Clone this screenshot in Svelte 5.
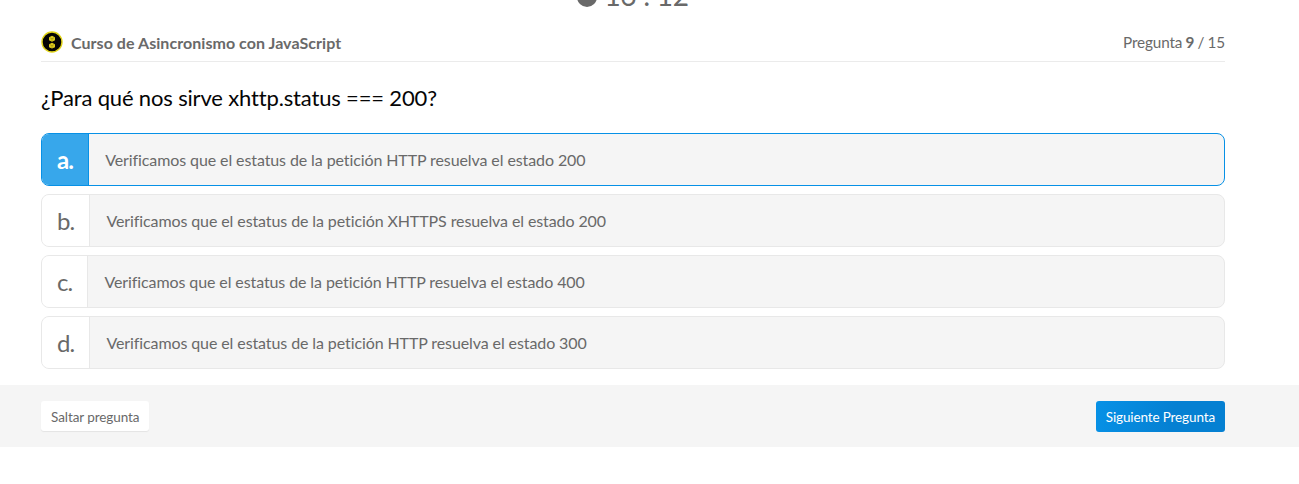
<script>
  const options = [
    { key: 'a', text: 'Verificamos que el estatus de la petición HTTP resuelva el estado 200' },
    { key: 'b', text: 'Verificamos que el estatus de la petición XHTTPS resuelva el estado 200' },
    { key: 'c', text: 'Verificamos que el estatus de la petición HTTP resuelva el estado 400' },
    { key: 'd', text: 'Verificamos que el estatus de la petición HTTP resuelva el estado 300' }
  ];
  let selected = $state('a');
</script>

<div class="page">
  <div class="timer">
    <svg width="20" height="20" viewBox="0 0 20 20"><circle cx="10" cy="10" r="10" fill="#696969" /></svg>
    <span>16 : 12</span>
  </div>
  <main>
    <header>
      <svg class="badge" width="22" height="22" viewBox="0 0 22 22">
        <circle cx="11" cy="11" r="10" fill="#050505" stroke="#e0d318" stroke-width="1.4" />
        <path d="M11 4.8 14 6.2V9.3L11 10.7 8 9.3V6.2ZM11 11.8 14 13.2V16.2L11 17.6 8 16.2V13.2Z" fill="#dccb1c" />
        <path d="M8.5 6.5 11 7.8 13.5 6.5M11 7.8V10.5M8.5 13.4 11 14.7 13.5 13.4M11 14.7V17.2" fill="none" stroke="#857916" stroke-width=".5" />
      </svg>
      <strong>Curso de Asincronismo con JavaScript</strong>
      <span class="count">Pregunta <b>9</b> / 15</span>
    </header>
    <h1>¿Para qué nos sirve xhttp.status === 200?</h1>
    <div class="options">
      {#each options as o}
        <button class="option" class:active={selected === o.key} onclick={() => (selected = o.key)}>
          <span class="key">{o.key}.</span><span class="text">{o.text}</span>
        </button>
      {/each}
    </div>
  </main>
  <footer>
    <button class="skip">Saltar pregunta</button>
    <button class="next">Siguiente Pregunta</button>
  </footer>
</div>

<style>
  :global(body) { background: #fff; }
  .page { height: 484px; overflow: hidden; font-family: Lato, sans-serif; color: #696969; }
  button { font-family: inherit; color: inherit; margin: 0; cursor: pointer; box-sizing: border-box; }
  .timer { display: flex; justify-content: center; align-items: center; gap: 7px; height: 36px; margin: -22px 33px 0 0; font-size: 28px; letter-spacing: -0.3px; }
  .timer svg { margin-top: 1px; }
  .timer span { line-height: 32px; padding-bottom: 3px; }
  main { width: 1184px; margin-left: 41px; }
  header { display: flex; align-items: center; height: 48px; border-bottom: 1px solid #ebebeb; padding-top: 9px; box-sizing: border-box; }
  strong { margin-left: 8px; font-size: 16px; letter-spacing: 0.05px; }
  .count { margin-left: auto; font-size: 15.3px; letter-spacing: -0.15px; word-spacing: -0.5px; }
  h1 { margin: 0; height: 71px; line-height: 71px; font-size: 22px; font-weight: 400; letter-spacing: -0.16px; color: #050505; }
  .options { display: grid; gap: 8px; }
  .option { display: flex; height: 53px; padding: 0; border: 1px solid #e8e8e8; border-radius: 8px; background: #f5f5f5; overflow: hidden; text-align: left; }
  .key { height: 100%; padding: 0 15px; background: #fff; border-right: 1px solid #e8e8e8; font-size: 24px; line-height: 51px; letter-spacing: -0.85px; }
  .text { padding-left: 16px; font-size: 16px; line-height: 51px; letter-spacing: -0.1px; }
  .active { border-color: #0791e6; }
  .active .key { background: #37a7eb; color: #fff; font-weight: 700; border-color: #0791e6; }
  footer { display: flex; justify-content: space-between; height: 62px; margin-top: 16px; padding: 16px 74px 0 41px; box-sizing: border-box; background: #f5f5f5; }
  footer button { height: 31px; border: 0; border-radius: 3px; padding: 0 10px; font-size: 13.5px; letter-spacing: -0.08px; }
  .skip { height: 30px; padding-top: 2px; background: #fff; box-shadow: 0 1px 1px #e4e4e4; }
  .next { background: linear-gradient(100deg, #0791e6, #0580d2 60%); color: #fff; letter-spacing: -0.13px; }
</style>
